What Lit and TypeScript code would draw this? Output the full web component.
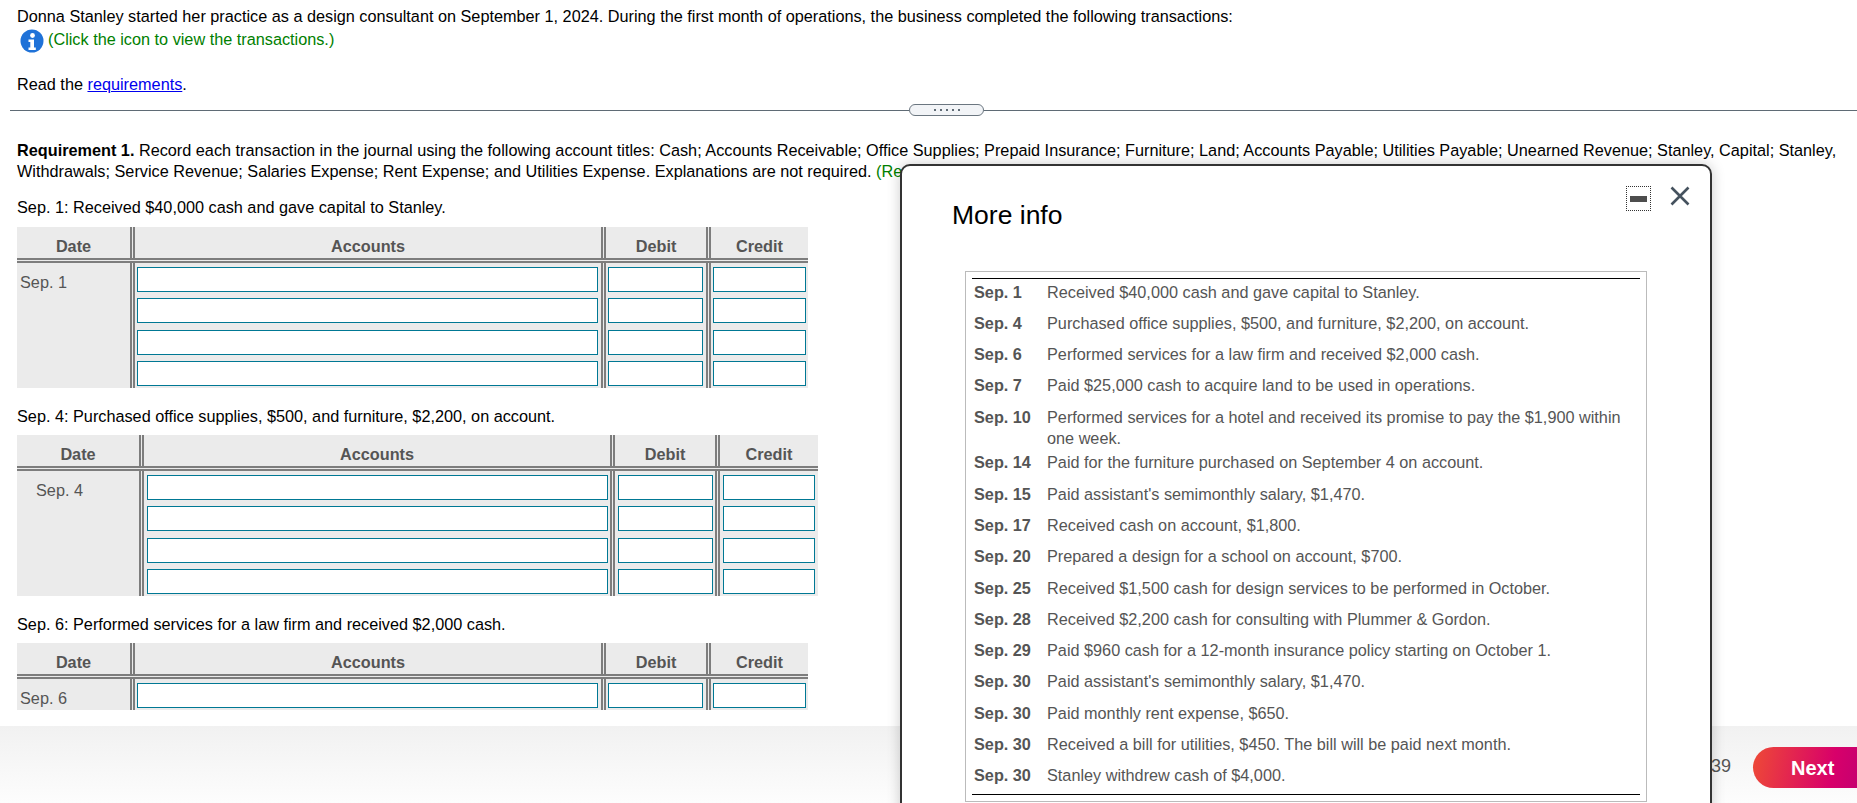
import { LitElement, html, css } from 'lit';
import { customElement } from 'lit/decorators.js';

interface Entry { date: string; text: string; tall?: boolean; }

const ENTRIES: Entry[] = [
  { date: 'Sep. 1', text: 'Received $40,000 cash and gave capital to Stanley.' },
  { date: 'Sep. 4', text: 'Purchased office supplies, $500, and furniture, $2,200, on account.' },
  { date: 'Sep. 6', text: 'Performed services for a law firm and received $2,000 cash.' },
  { date: 'Sep. 7', text: 'Paid $25,000 cash to acquire land to be used in operations.' },
  { date: 'Sep. 10', text: 'Performed services for a hotel and received its promise to pay the $1,900 within one week.', tall: true },
  { date: 'Sep. 14', text: 'Paid for the furniture purchased on September 4 on account.' },
  { date: 'Sep. 15', text: "Paid assistant's semimonthly salary, $1,470." },
  { date: 'Sep. 17', text: 'Received cash on account, $1,800.' },
  { date: 'Sep. 20', text: 'Prepared a design for a school on account, $700.' },
  { date: 'Sep. 25', text: 'Received $1,500 cash for design services to be performed in October.' },
  { date: 'Sep. 28', text: 'Received $2,200 cash for consulting with Plummer & Gordon.' },
  { date: 'Sep. 29', text: 'Paid $960 cash for a 12-month insurance policy starting on October 1.' },
  { date: 'Sep. 30', text: "Paid assistant's semimonthly salary, $1,470." },
  { date: 'Sep. 30', text: 'Paid monthly rent expense, $650.' },
  { date: 'Sep. 30', text: 'Received a bill for utilities, $450. The bill will be paid next month.' },
  { date: 'Sep. 30', text: 'Stanley withdrew cash of $4,000.' },
];

@customElement('app-root')
export class AppRoot extends LitElement {
  static styles = css`
    :host {
      display: flex;
      flex-direction: column;
      position: relative;
      width: 1857px;
      height: 803px;
      overflow: hidden;
      background: #fff;
      color: #000;
      font-family: "Liberation Sans", Arial, sans-serif;
      font-size: 16.25px;
      line-height: 20px;
    }
    .main { flex: 1; min-height: 0; overflow: hidden; padding-left: 17px; }
    .intro { padding-top: 6px; height: 104px; box-sizing: border-box; }
    .hint { display: flex; align-items: center; height: 24px; margin: 1px 0 0 3px; color: #008000; }
    .hint svg { width: 24px; height: 24px; margin: 4px 4px 0 0; }
    .read { margin-top: 23px; }
    a { color: #0000ee; text-decoration: underline; }
    .split { display: flex; align-items: center; height: 12px; margin-left: -7px; }
    .split i { flex: 1; height: 1px; background: #5f6b75; }
    .split i:first-child { flex: none; width: 899px; }
    .grip {
      width: 75px; height: 12px; box-sizing: border-box;
      border: 1px solid #6b7680; border-radius: 6px; background: #f2f4f7;
      display: flex; align-items: center; justify-content: center; gap: 4px;
    }
    .grip b { width: 2px; height: 2px; background: #5f6b75; }
    .req { padding-top: 24px; height: 63px; box-sizing: border-box; line-height: 20.5px; white-space: nowrap; }
    .green { color: #008000; }
    .label { margin: 18px 0 9px; }
    .label.first { margin-bottom: 10px; }
    .table { background: #ebebeb; color: #555; }
    .t1 { width: 791px; --cols: 113px 5px 466px 5px 100px 5px 97px; }
    .t2 { width: 801px; --cols: 122px 5px 466px 5px 100px 5px 98px; }
    .head, .body { display: grid; grid-template-columns: var(--cols); }
    .head { height: 31px; }
    .head > div { display: flex; align-items: center; justify-content: center; font-weight: bold; padding-top: 7px; box-sizing: border-box; }
    .head > .vbar { padding: 0; }
    .vbar { border-left: 2px solid #7d7d7d; border-right: 2px solid #7d7d7d; box-sizing: border-box; }
    .hrule { height: 5px; box-sizing: border-box; border-top: 2px solid #7d7d7d; border-bottom: 2px solid #7d7d7d; }
    .date { padding: 9px 0 0 3px; }
    .t2 .date { padding-left: 19px; }
    .stack { display: flex; flex-direction: column; gap: 6.33px; padding: 4px 3px 2px 2px; }
    .t1 .stack.c { padding-right: 2px; }
    .t2 .stack { padding-left: 3px; padding-right: 2px; }
    .t2 .stack.c { padding-right: 3px; }
    .in { height: 25px; box-sizing: border-box; background: #fff; border: 1px solid #007894; }
    .footer {
      flex: none; height: 77px; box-sizing: border-box;
      background: linear-gradient(#f1f1f1, #fdfdfd);
      display: flex; justify-content: flex-end; align-items: flex-start;
      padding-top: 21px;
    }
    .count { color: #555; font-size: 18px; margin: 9px 22px 0 0; }
    .next {
      width: 104px; height: 41px; border-radius: 21px 0 0 21px;
      background: linear-gradient(100deg, #ee4a36, #d8006a 75%, #c60070);
      color: #fff; font-weight: bold; font-size: 20px;
      display: flex; align-items: center; padding-left: 38px; box-sizing: border-box;
    }
    .modal {
      position: absolute; left: 900px; top: 164px; width: 812px; height: 700px;
      box-sizing: border-box; background: #fff; border: 2px solid #333;
      border-radius: 10px; box-shadow: 0 0 14px rgba(0,0,0,.2);
    }
    .title { position: absolute; left: 50px; top: 33px; font-size: 26.5px; line-height: 32px; color: #000; }
    .min {
      position: absolute; left: 724px; top: 20px; width: 25px; height: 25px; box-sizing: border-box;
      border: 1px dotted #333; display: flex; align-items: center; justify-content: center;
    }
    .min b { width: 17px; height: 6px; background: #4d4d4d; }
    .close { position: absolute; left: 768px; top: 20px; width: 20px; height: 20px; }
    .info {
      position: absolute; left: 63px; top: 105px; width: 682px; height: 531px; box-sizing: border-box;
      border: 1px solid #bbb; padding: 6px 6px 0;
    }
    .rule { height: 1px; background: #000; }
    .rows { height: 515px; }
    .entry { display: flex; color: #555; line-height: 21px; padding: 2.6px 0 0 2px; height: 31.3px; box-sizing: border-box; }
    .entry.tall { height: 45.6px; }
    .entry b { width: 73px; flex: none; }
    .entry span { width: 585px; }
  `;

  private _table(date: string, rows: number, cls: string) {
    const col = (c = '') => html`<div class="stack ${c}">${Array.from({ length: rows }, () => html`<div class="in"></div>`)}</div>`;
    return html`
      <div class="table ${cls}">
        <div class="head">
          <div>Date</div><div class="vbar"></div>
          <div>Accounts</div><div class="vbar"></div>
          <div>Debit</div><div class="vbar"></div>
          <div>Credit</div>
        </div>
        <div class="hrule"></div>
        <div class="body">
          <div class="date">${date}</div><div class="vbar"></div>
          ${col()}<div class="vbar"></div>
          ${col()}<div class="vbar"></div>
          ${col('c')}
        </div>
      </div>
    `;
  }

  render() {
    return html`
      <div class="main">
        <div class="intro">
          <div>Donna Stanley started her practice as a design consultant on September 1, 2024. During the first month of operations, the business completed the following transactions:</div>
          <div class="hint">
            <svg viewBox="0 0 24 24">
              <circle cx="12" cy="12" r="11.5" fill="#1f72d8"/>
              <circle cx="12.5" cy="6.5" r="2.4" fill="#fff"/>
              <path d="M8.5 10.5h5.5v8h1.8v2.6h-7.3v-2.6h1.8v-5.4h-1.8z" fill="#fff"/>
            </svg>
            (Click the icon to view the transactions.)
          </div>
          <div class="read">Read the <a href="#">requirements</a>.</div>
        </div>
        <div class="split"><i></i><div class="grip"><b></b><b></b><b></b><b></b><b></b></div><i></i></div>
        <div class="req">
          <div><b>Requirement 1.</b> Record each transaction in the journal using the following account titles: Cash; Accounts Receivable; Office Supplies; Prepaid Insurance; Furniture; Land; Accounts Payable; Utilities Payable; Unearned Revenue; Stanley, Capital; Stanley,</div>
          <div>Withdrawals; Service Revenue; Salaries Expense; Rent Expense; and Utilities Expense. Explanations are not required. <span class="green">(Record debits first, then credits.)</span></div>
        </div>
        <div class="label first">Sep. 1: Received $40,000 cash and gave capital to Stanley.</div>
        ${this._table('Sep. 1', 4, 't1')}
        <div class="label">Sep. 4: Purchased office supplies, $500, and furniture, $2,200, on account.</div>
        ${this._table('Sep. 4', 4, 't2')}
        <div class="label">Sep. 6: Performed services for a law firm and received $2,000 cash.</div>
        ${this._table('Sep. 6', 1, 't1')}
      </div>
      <div class="footer">
        <span class="count">39</span>
        <div class="next">Next</div>
      </div>
      <div class="modal">
        <div class="title">More info</div>
        <div class="min"><b></b></div>
        <svg class="close" viewBox="0 0 20 20"><path d="M1.5 1.5L18.5 18.5M18.5 1.5L1.5 18.5" stroke="#45525e" stroke-width="2.6" fill="none"/></svg>
        <div class="info">
          <div class="rule"></div>
          <div class="rows">
            ${ENTRIES.map(e => html`<div class="entry ${e.tall ? 'tall' : ''}"><b>${e.date}</b><span>${e.text}</span></div>`)}
          </div>
          <div class="rule"></div>
        </div>
      </div>
    `;
  }
}

declare global {
  interface HTMLElementTagNameMap { 'app-root': AppRoot; }
}
